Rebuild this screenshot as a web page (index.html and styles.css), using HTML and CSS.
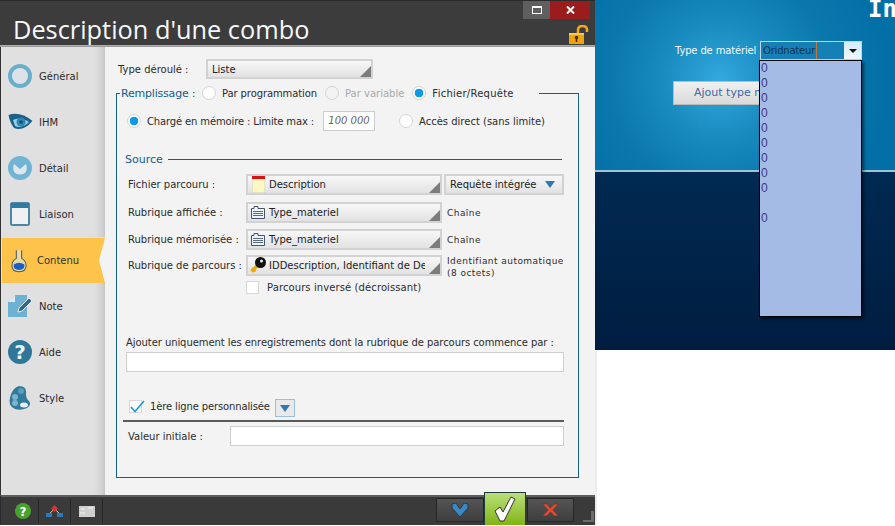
FILE: index.html
```html
<!DOCTYPE html>
<html lang="fr">
<head>
    <meta charset="UTF-8">
    <title>Description d'une combo</title>
    <link rel="stylesheet" href="styles.css">
</head>
<body>
    <div class="window">
        <div class="titlebar">
            <h1>Description d'une combo</h1>
            <div class="win-buttons">
                <span class="win-max"><svg width="10" height="8" viewBox="0 0 10 8"><rect x="0.5" y="0.5" width="9" height="7" fill="none" stroke="#fff"/><rect width="10" height="2" fill="#fff"/></svg></span>
                <span class="win-close"><svg width="9" height="8" viewBox="0 0 9 8"><path d="M1 0.5 L8 7.5 M8 0.5 L1 7.5" stroke="#fff" stroke-width="2"/></svg></span>
            </div>
            <svg class="lock" width="20" height="19" viewBox="0 0 20 19"><path d="M9 9 V5 Q9 1 13.500 1 Q18 1 18 5 V7" fill="none" stroke="#f5a90f" stroke-width="2.500"/><rect x="0" y="8" width="15" height="11" fill="#f0a30c"/><rect x="0" y="8" width="15" height="2" fill="#ffc74a"/><circle cx="7.500" cy="12.500" r="1.800" fill="#4a3000"/><rect x="6.700" y="13" width="1.600" height="4" fill="#4a3000"/></svg>
        </div>

        <div class="main">
            <ul class="sidebar">
                <li>
                    <svg width="24" height="24" viewBox="0 0 24 24"><circle cx="12" cy="12" r="10" fill="#dbe3e8" stroke="#69aecb" stroke-width="4"/></svg>
                    <span>Général</span>
                </li>
                <li>
                    <svg width="25" height="18" viewBox="0 0 25 18"><path d="M0.500 2 Q12 -2 24.500 8 Q15 19 6 15 Q2 10 0.500 2Z" fill="#1d5f86"/><path d="M5 7 Q12 3 21 9 Q14 16 7 13Z" fill="#8fd0ec"/><circle cx="13" cy="9" r="4.500" fill="#2f86b4"/><circle cx="13" cy="9" r="1.800" fill="#174e70"/></svg>
                    <span>IHM</span>
                </li>
                <li>
                    <svg width="24" height="24" viewBox="0 0 24 24"><circle cx="12" cy="12" r="12" fill="#6fb4d4"/><path d="M6 8 L12 13 L18 8 Q20 14 17 17 Q12 20 7 17 Q4 14 6 8Z" fill="#dfe6ea"/></svg>
                    <span>Détail</span>
                </li>
                <li>
                    <svg class="icon-narrow" width="20" height="24" viewBox="0 0 20 24"><rect x="1" y="1" width="18" height="22" rx="1.500" fill="#eef0f1" stroke="#4d87a6" stroke-width="2"/><rect x="1" y="1" width="18" height="5" fill="#2f7aa3"/></svg>
                    <span>Liaison</span>
                </li>
                <li class="active">
                    <svg class="icon-flask" width="16" height="26" viewBox="0 0 18 26"><path d="M6 1 V10 Q1 13 1 18 Q1 25 9 25 Q17 25 17 18 Q17 13 12 10 V1" fill="#e8d9a8" stroke="#5a5a50" stroke-width="1.200"/><path d="M3 17 Q9 13 15 17 Q16 23 9 23 Q2 23 3 17Z" fill="#1c5fc4"/></svg>
                    <span>Contenu</span>
                </li>
                <li>
                    <svg width="25" height="23" viewBox="0 0 25 23"><path d="M7 0 H19 V22 H0 V7Z" fill="#6db2d3"/><path d="M0 7 H7 V0Z" fill="#dcebf2"/><path d="M11 13 L21 3 L24 6 L14 16 L10 17Z" fill="#2c6a8f" stroke="#e3edf2" stroke-width="1"/></svg>
                    <span>Note</span>
                </li>
                <li>
                    <svg width="24" height="24" viewBox="0 0 24 24"><circle cx="12" cy="12" r="12" fill="#2f7799"/><text x="12" y="19" class="icon-q">?</text></svg>
                    <span>Aide</span>
                </li>
                <li>
                    <svg class="icon-style" width="22" height="24" viewBox="0 0 22 24"><path d="M10 0 Q18 0 17 8 Q17 13 20 15 Q23 19 18 22 Q12 25 6 23 Q-1 20 1 12 Q3 2 10 0Z" fill="#33799c"/><circle cx="12" cy="5" r="3" fill="#5a9cbb"/><circle cx="6" cy="11" r="3" fill="#7ab4cf"/><circle cx="6" cy="17" r="3" fill="#7ab4cf"/><ellipse cx="15" cy="19" rx="4" ry="2.500" fill="#e4eef3"/></svg>
                    <span>Style</span>
                </li>
            </ul>

            <div class="content">
                <div class="type-row">
                    <label class="type-label">Type déroulé :</label>
                    <div class="combo type-combo">Liste</div>
                </div>

                <fieldset class="panel">
                    <legend>
                        <span class="legend-title">Remplissage :</span>
                        <span class="radio"></span><span class="radio-text slim">Par programmation</span>
                        <span class="radio disabled"></span><span class="radio-text muted">Par variable</span>
                        <span class="radio checked"></span><span class="radio-text wide">Fichier/Requête</span>
                    </legend>

                    <div class="memory-row">
                        <span class="radio checked"></span><span class="radio-text tight">Chargé en mémoire : Limite max :</span>
                        <div class="limit">100 000</div>
                        <span class="radio"></span><span class="radio-text">Accès direct (sans limite)</span>
                    </div>

                    <div class="source-title"><span>Source</span></div>

                    <div class="source-grid">
                        <label>Fichier parcouru :</label>
                        <div class="combo">
                            <svg width="13" height="17" viewBox="0 0 13 17"><rect width="13" height="17" fill="#fff8c0" stroke="#ccc"/><rect width="13" height="3" fill="#e01010"/></svg>
                            Description
                        </div>
                        <div class="combo query">Requête intégrée <i class="arrow"></i></div>

                        <label>Rubrique affichée :</label>
                        <div class="combo">
                            <svg class="field-icon" width="14" height="13" viewBox="0 0 14 13"><path d="M0.500 2.500 H3 V0.500 H7 V2.500 H13.500 V12.500 H0.500Z" fill="#eef3f8" stroke="#44546a"/><path d="M2 5.500 H12 M2 7.500 H12 M2 9.500 H12" stroke="#5a6a80"/></svg>
                            Type_materiel
                        </div>
                        <span class="field-type">Chaîne</span>

                        <label>Rubrique mémorisée :</label>
                        <div class="combo">
                            <svg class="field-icon" width="14" height="13" viewBox="0 0 14 13"><path d="M0.500 2.500 H3 V0.500 H7 V2.500 H13.500 V12.500 H0.500Z" fill="#eef3f8" stroke="#44546a"/><path d="M2 5.500 H12 M2 7.500 H12 M2 9.500 H12" stroke="#5a6a80"/></svg>
                            Type_materiel
                        </div>
                        <span class="field-type">Chaîne</span>

                        <label>Rubrique de parcours :</label>
                        <div class="combo combo-key">
                            <svg width="17" height="17" viewBox="0 0 17 17"><path d="M10 7 L2.500 14.500" stroke="#e8a810" stroke-width="3.500"/><path d="M3 11 L6.500 14.500" stroke="#e8a810" stroke-width="2"/><circle cx="11.500" cy="5.500" r="5.500" fill="#111"/><circle cx="12.500" cy="4" r="1.500" fill="#eee"/></svg>
                            <span class="clip">IDDescription, Identifiant de De</span>
                        </div>
                        <span class="field-type two-lines">Identifiant automatique<br>(8 octets)</span>

                        <div class="reverse">
                            <span class="check"></span><span class="reverse-text">Parcours inversé (décroissant)</span>
                        </div>
                    </div>

                    <p class="filter-label">Ajouter uniquement les enregistrements dont la rubrique de parcours commence par :</p>
                    <div class="text-input filter-input"></div>

                    <div class="first-line">
                        <span class="check checked"><svg width="15" height="13" viewBox="0 0 15 13"><path d="M1 7 L5 11.500 L14 1" fill="none" stroke="#1a9ad8" stroke-width="1.600"/></svg></span>
                        <span class="first-line-text">1ère ligne personnalisée</span>
                        <span class="drop-btn"><i class="arrow"></i></span>
                    </div>
                    <div class="initial-row">
                        <label>Valeur initiale :</label>
                        <div class="text-input"></div>
                    </div>
                </fieldset>
            </div>
        </div>

        <div class="bottombar">
            <div class="tool"><svg width="16" height="16" viewBox="0 0 16 16"><circle cx="8" cy="8" r="8" fill="#47a32c"/><text x="8" y="12.500" class="icon-help">?</text></svg></div>
            <div class="tool"><svg width="17" height="13" viewBox="0 0 17 13"><path d="M3 9 L8.500 4 L14 9" fill="none" stroke="#ccc"/><rect x="0" y="8" width="6" height="4" fill="#2f78b8"/><rect x="11" y="8" width="6" height="4" fill="#2f78b8"/><path d="M8.500 0 L12 3.500 L8.500 7 L5 3.500Z" fill="#e03030"/></svg></div>
            <div class="tool"><svg width="16" height="11" viewBox="0 0 16 11"><rect width="16" height="11" fill="#cfcfcf"/><path d="M1 7 H6 M9 2 H14 M2 3 H6" stroke="#f4f4f4"/></svg></div>
            <div class="actions">
                <div class="action"><svg width="18" height="14" viewBox="0 0 18 14"><path d="M1 1 L5 0 L9 6 L13 0 L17 1 L17 5 L9 14 L1 5Z" fill="#3b87c4" stroke="#2a3a48"/></svg></div>
                <div class="action ok"><svg width="22" height="26" viewBox="0 0 22 26"><path d="M1 15 L6 11 L9 16 L17 1 L21 3 L10 25 L6 25Z" fill="#fff" stroke="#333"/></svg></div>
                <div class="action"><svg width="17" height="14" viewBox="0 0 17 14"><path d="M0.500 1 H5 L8.500 5 L12 1 H16.500 L11 7 L16.500 13 H12 L8.500 9 L5 13 H0.500 L6 7Z" fill="#dd4a30" stroke="#3a3a3a" stroke-width="0.500"/></svg></div>
            </div>
            <svg class="grip" width="11" height="11" viewBox="0 0 11 11"><path d="M0 11 L0 9 H8 V0 H11 V11Z" fill="#6c6c6c"/></svg>
        </div>
    </div>

    <div class="preview">
        <div class="preview-top">
            <div class="page-title">In</div>
            <div class="material-row">
                <label>Type de matériel</label>
                <div class="material-input"><span class="typed">Oridnateur</span><span class="material-drop"></span></div>
            </div>
            <div class="add-btn">Ajout type matériel</div>
        </div>
        <div class="preview-bottom"></div>
        <ul class="drop-list">
            <li>0</li><li>0</li><li>0</li><li>0</li><li>0</li><li>0</li><li>0</li><li>0</li><li>0</li><li></li><li>0</li>
        </ul>
    </div>
</body>
</html>
```

FILE: styles.css
```css
* {
    box-sizing: border-box;
}
body {
    margin: 0;
    height: 526px;
    display: flex;
    align-items: flex-start;
    background-color: #fff;
    overflow: hidden;
    font-family: "DejaVu Sans", sans-serif;
    font-size: 10px;
    color: #2b2b2b;
}
ul {
    margin: 0;
    padding: 0;
    list-style: none;
}

/* Window */
.window {
    width: 595px;
    height: 525px;
    flex-shrink: 0;
    display: flex;
    flex-direction: column;
    box-shadow: 2px 0 0 #ececec;
}
.titlebar {
    height: 47px;
    flex-shrink: 0;
    position: relative;
    padding: 14px 0 0 13px;
    background-color: #3c3c3c;
    border-top: 1px solid #2a2a2a;
    border-bottom: 1px solid #9a9a9a;
    box-shadow: inset 0 -1px 0 #e2ac2c;
}
.titlebar h1 {
    margin: 0;
    font-family: "Open Sans", sans-serif;
    font-weight: 400;
    font-size: 25.35px;
    line-height: 28px;
    color: #f6f9fc;
}
.win-buttons {
    position: absolute;
    top: 0;
    left: 523px;
    display: flex;
    height: 18px;
}
.win-max, .win-close {
    display: flex;
    align-items: center;
    justify-content: center;
}
.win-max {
    width: 27px;
    background-color: #5f5f5f;
}
.win-close {
    width: 40px;
    background-color: #9b1c1c;
}
.lock {
    position: absolute;
    top: 24px;
    left: 569px;
}
.main {
    flex: 1;
    display: flex;
    min-height: 0;
}

/* Sidebar */
.sidebar {
    width: 105px;
    flex-shrink: 0;
    padding: 6px 0 0 1px;
    border-left: 1px solid #333;
    background: linear-gradient(to right, #e0e0e0 90%, #cfcfcf 98%, #c4c4c4);
}
.sidebar li {
    height: 46px;
    display: grid;
    grid-template-columns: 31px 1fr;
    align-items: center;
    padding-left: 6px;
}
.icon-narrow {
    margin-left: 2px;
}
.icon-style {
    margin-left: 1px;
}
.sidebar li.active {
    position: relative;
    grid-template-columns: 29px 1fr;
    border-top: 1px solid #e0e0e0;
    background-color: #fdc34a;
    background-clip: padding-box;
    color: #333;
}
.icon-flask {
    margin-left: 3px;
}
.sidebar li.active::after {
    content: "";
    position: absolute;
    right: 0;
    top: 0;
    width: 6px;
    height: 45px;
    background-color: #f3f3f3;
    clip-path: polygon(100% 0, 100% 100%, 0 50%);
}
.icon-q {
    font-family: "DejaVu Sans", sans-serif;
    font-size: 20px;
    font-weight: bold;
    fill: #e8f0f4;
    text-anchor: middle;
}
.icon-help {
    font-family: "DejaVu Sans", sans-serif;
    font-size: 12px;
    font-weight: bold;
    fill: #fff;
    text-anchor: middle;
}

/* Content */
.content {
    flex: 1;
    padding: 12px 0 0 11px;
    background-color: #f3f3f3;
}
.type-row {
    display: flex;
    height: 20px;
    align-items: center;
}
.type-label {
    width: 90px;
    padding-left: 2px;
}
.combo {
    position: relative;
    display: flex;
    align-items: center;
    gap: 4px;
    height: 21px;
    padding-left: 4px;
    border: 2px solid #d2d2d2;
    background: linear-gradient(#f7f7f7, #e2e2e2);
    color: #222;
}
.combo::after {
    content: "";
    position: absolute;
    right: 0;
    bottom: 0;
    width: 11px;
    height: 11px;
    background-color: #7c7c7c;
    clip-path: polygon(100% 0, 100% 100%, 0 100%);
}
.type-combo {
    width: 167px;
    height: 20px;
}
.field-icon {
    margin-left: -1px;
}
.combo-key {
    gap: 3px;
    padding-left: 1px;
}
.clip {
    width: 156px;
    white-space: nowrap;
    overflow: hidden;
}

/* Bordered panel */
.panel {
    width: 463px;
    height: 395px;
    margin: 4px 0 0;
    padding: 0;
    border: 1px solid #11608f;
    min-width: 0;
}
.panel legend {
    display: flex;
    align-items: center;
    height: 20px;
    margin-left: 3px;
    padding: 0 17px 0 1px;
}
.legend-title {
    width: 81px;
    color: #11608f;
    font-size: 11px;
    letter-spacing: -0.2px;
    white-space: nowrap;
}
.radio {
    width: 14px;
    height: 14px;
    flex-shrink: 0;
    border-radius: 50%;
    background-color: #fff;
    border: 1px solid #d4d4d4;
}
.radio.checked {
    border-color: #d4d4d4;
    background: radial-gradient(circle, #0a9ae6 0 4px, #fff 4.600px);
}
.radio.disabled {
    background-color: #f3f3f3;
}
.radio-text {
    margin: 0 8px 0 6px;
    white-space: nowrap;
}
.tight {
    letter-spacing: -0.14px;
}
.slim {
    letter-spacing: -0.1px;
}
.wide {
    letter-spacing: 0.25px;
}
.muted {
    color: #a8a8a8;
}
.memory-row {
    display: flex;
    align-items: center;
    height: 20px;
    margin: 8px 0 0 10px;
}
.memory-row .radio-text {
    margin: 0 9px 0 6px;
}
.limit {
    width: 52px;
    height: 20px;
    margin-right: 24px;
    border: 1px solid #ccc;
    background-color: #fff;
    font-style: italic;
    color: #666;
    text-align: center;
    line-height: 18px;
}
.source-title {
    display: flex;
    align-items: center;
    gap: 5px;
    width: 437px;
    margin: 18px 0 0 8px;
    height: 20px;
    color: #11608f;
    font-size: 11px;
}
.source-title::after {
    content: "";
    flex: 1;
    border-top: 1px solid #11608f;
}
.source-grid {
    display: grid;
    grid-template-columns: 118px 196px 1fr;
    grid-template-rows: 28px 27px 26px 26px 20px;
    margin: 5px 0 0 11px;
}
.source-grid label {
    padding-top: 5px;
}
.query {
    width: 120px;
    margin-left: 2px;
}
.query::after {
    display: none;
}
.query .arrow {
    margin-left: 5px;
}
.arrow {
    width: 0;
    height: 0;
    border-left: 5px solid transparent;
    border-right: 5px solid transparent;
    border-top: 7px solid #2f78b8;
}
.field-type {
    margin-left: 5px;
    padding-top: 6px;
    font-size: 9px;
    letter-spacing: 0.45px;
}
.two-lines {
    padding-top: 0;
    line-height: 12px;
}
.reverse {
    grid-column: 2 / 4;
    display: flex;
    align-items: flex-start;
    gap: 8px;
}
.reverse-text {
    margin-top: 1px;
    letter-spacing: 0.1px;
}
.check {
    width: 13px;
    height: 13px;
    flex-shrink: 0;
    background-color: #fff;
    border: 1px solid #d8d8d8;
}
.check.checked {
    margin-top: 1px;
}
.check.checked svg {
    display: block;
    margin: -1px 0 0 0;
}
.filter-label {
    margin: 35px 0 0 9px;
    line-height: 14px;
    letter-spacing: -0.07px;
}
.text-input {
    height: 20px;
    background-color: #fff;
    border: 1px solid #cfcfcf;
}
.filter-input {
    width: 438px;
    margin: 2px 0 0 9px;
}
.first-line {
    display: flex;
    align-items: flex-start;
    gap: 8px;
    width: 441px;
    height: 25px;
    margin: 25px 0 0 6px;
    padding: 2px 0 0 6px;
    border-bottom: 2px solid #5a5a5a;
}
.first-line-text {
    margin-top: 2px;
    letter-spacing: -0.14px;
}
.drop-btn {
    width: 20px;
    height: 18px;
    margin-left: -3px;
    display: flex;
    align-items: center;
    justify-content: center;
    border: 1px solid #9cc0d8;
    background-color: #e9e9e9;
}
.initial-row {
    display: flex;
    align-items: center;
    margin: 4px 0 0 11px;
}
.initial-row label {
    width: 102px;
}
.initial-row .text-input {
    width: 334px;
}

/* Bottom bar */
.bottombar {
    height: 30px;
    flex-shrink: 0;
    display: flex;
    position: relative;
    padding-left: 6px;
    background-color: #3a3a3a;
    border-top: 2px solid #5e5e5e;
    border-left: 1px solid #2a2a2a;
}
.tool {
    width: 32px;
    display: flex;
    align-items: center;
    justify-content: center;
    border-right: 1px solid #262626;
    margin: 2px 0;
}
.actions {
    position: absolute;
    top: -3px;
    left: 435px;
    display: flex;
    height: 31px;
    align-items: flex-end;
}
.action {
    width: 48px;
    height: 24px;
    margin-bottom: 3px;
    display: flex;
    align-items: center;
    justify-content: center;
    background: linear-gradient(#555, #3e3e3e);
    border: 1px solid #262626;
}
.action.ok {
    width: 42px;
    height: 33px;
    margin-bottom: 0;
    background: linear-gradient(#bbe07a, #80b414);
    border: 1px solid #1e3a3a;
    border-bottom: none;
}
.action:last-child {
    width: 47px;
    margin-left: 1px;
}
.grip {
    position: absolute;
    right: 1px;
    bottom: 3px;
}

/* Preview */
.preview {
    position: relative;
    flex: 1;
    height: 350px;
    display: flex;
    flex-direction: column;
}
.preview-top {
    height: 172px;
    position: relative;
    padding: 41px 0 0 80px;
    background: radial-gradient(circle at 125px 80px, #33a9df 0, #1a8cc0 55px, #0a78ad 110px, #0270a6 170px);
    border-bottom: 2px solid #9fc4d6;
}
.page-title {
    position: absolute;
    top: -5px;
    left: 273px;
    font-family: "DejaVu Sans Mono", monospace;
    font-size: 24px;
    font-weight: bold;
    color: #fff;
    white-space: nowrap;
}
.material-row {
    display: flex;
    align-items: center;
    color: #f2f8fb;
}
.material-row label {
    width: 85px;
    letter-spacing: -0.15px;
    white-space: nowrap;
}
.material-input {
    width: 102px;
    height: 19px;
    display: flex;
    justify-content: space-between;
    background-color: #1480b5;
    border: 1px solid #b8d8e8;
    color: #10364f;
    padding-left: 2px;
}
.typed {
    line-height: 17px;
    letter-spacing: -0.2px;
    border-right: 1px solid #c07838;
    padding-right: 1px;
}
.material-drop {
    width: 17px;
    position: relative;
    background: linear-gradient(#d4ecf8, #eef8fc);
}
.material-drop::after {
    content: "";
    position: absolute;
    left: 5px;
    top: 7px;
    border-left: 4px solid transparent;
    border-right: 4px solid transparent;
    border-top: 4px solid #111;
}
.add-btn {
    width: 130px;
    height: 24px;
    margin: 21px 0 0 -2px;
    padding-left: 20px;
    line-height: 22px;
    white-space: nowrap;
    font-size: 11px;
    color: #3c6aa8;
    border: 1px solid #bbb;
    background: linear-gradient(#f0f0f0, #dadada);
}
.preview-bottom {
    flex: 1;
    background: linear-gradient(#002a52, #001d40);
}
.drop-list {
    position: absolute;
    top: 60px;
    left: 164px;
    width: 103px;
    height: 257px;
    padding: 1px 0 0 1px;
    background-color: #a4bbe6;
    border: 1px solid #000;
    box-shadow: 2px 2px 3px rgba(0, 0, 0, 0.5);
    font-family: "Liberation Sans", sans-serif;
    font-size: 12px;
    color: #3d3a78;
}
.drop-list li {
    height: 15px;
    line-height: 13px;
}
```
